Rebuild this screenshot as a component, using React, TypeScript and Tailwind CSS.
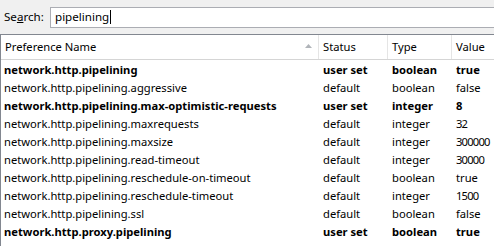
import React from "react";

type Row = { name: string; status: string; type: string; value: string; bold: boolean };

const rows: Row[] = [
  { name: "network.http.pipelining", status: "user set", type: "boolean", value: "true", bold: true },
  { name: "network.http.pipelining.aggressive", status: "default", type: "boolean", value: "false", bold: false },
  { name: "network.http.pipelining.max-optimistic-requests", status: "user set", type: "integer", value: "8", bold: true },
  { name: "network.http.pipelining.maxrequests", status: "default", type: "integer", value: "32", bold: false },
  { name: "network.http.pipelining.maxsize", status: "default", type: "integer", value: "300000", bold: false },
  { name: "network.http.pipelining.read-timeout", status: "default", type: "integer", value: "30000", bold: false },
  { name: "network.http.pipelining.reschedule-on-timeout", status: "default", type: "boolean", value: "true", bold: false },
  { name: "network.http.pipelining.reschedule-timeout", status: "default", type: "integer", value: "1500", bold: false },
  { name: "network.http.pipelining.ssl", status: "default", type: "boolean", value: "false", bold: false },
  { name: "network.http.proxy.pipelining", status: "user set", type: "boolean", value: "true", bold: true },
];

export default function App() {
  return (
    <div
      className="w-[494px] h-[246px] overflow-hidden bg-[#f0f0f0] text-[11.2px] text-black"
      style={{ fontFamily: '"Noto Sans", "Liberation Sans", sans-serif' }}
    >
      <div className="flex items-center h-[34px] pl-[4px]">
        <span className="w-[46px] text-[11.6px]">
          Se<span className="underline">a</span>rch:
        </span>
        <div className="flex-1 h-[21px] border border-[#abadb3] border-r-0 bg-white flex items-center pl-[4px] text-[11.6px]">
          <span>pipelining</span>
          <span className="w-px h-[14px] bg-black ml-[1px]" />
        </div>
      </div>
      <div className="border-t border-l border-[#828790] bg-white h-[212px]">
        <div className="grid grid-cols-[318px_69px_64px_1fr] h-[25px] border-b border-[#d5d5d5] bg-white">
          <div className="flex items-center pl-[4px] pr-[6px] border-r border-[#e5e5e5]">
            <span className="flex-1">Preference Name</span>
            <svg width="7" height="4" viewBox="0 0 7 4" className="mb-[2px]">
              <path d="M0 4 L3.5 0 L7 4 Z" fill="#b0b4b9" />
            </svg>
          </div>
          <div className="flex items-center pl-[4px] border-r border-[#e5e5e5]">Status</div>
          <div className="flex items-center pl-[4px] border-r border-[#e5e5e5]">Type</div>
          <div className="flex items-center pl-[4px]">Value</div>
        </div>
        <div className="pt-[1px]">
          {rows.map((r) => (
            <div
              key={r.name}
              className={`grid grid-cols-[318px_69px_64px_1fr] h-[18px] items-center whitespace-nowrap ${r.bold ? "font-bold" : ""}`}
            >
              <div className="pl-[3px] overflow-hidden">{r.name}</div>
              <div className="pl-[4px]">{r.status}</div>
              <div className="pl-[4px]">{r.type}</div>
              <div className={/^\d+$/.test(r.value) ? "pl-[4px] tracking-[-0.8px]" : "pl-[4px]"}>{r.value}</div>
            </div>
          ))}
        </div>
      </div>
    </div>
  );
}
